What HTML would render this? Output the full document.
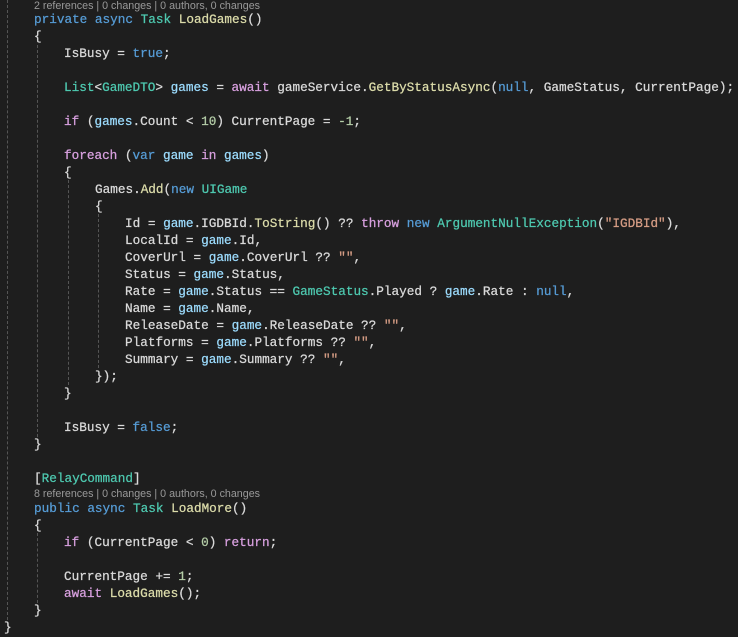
<!DOCTYPE html>
<html><head><meta charset="utf-8"><style>
html,body{margin:0;padding:0;background:#1e1e1e;width:738px;height:637px;overflow:hidden}
.l{position:absolute;height:17px;line-height:17px;font-family:"Liberation Mono",monospace;font-size:12.7px;color:#dadada;white-space:pre;-webkit-text-stroke:0.25px currentColor}
.lens{position:absolute;height:13px;line-height:13px;font-family:"Liberation Sans",sans-serif;font-size:10.7px;color:#999;white-space:pre}
.g{position:absolute;width:0;border-left:1px dashed #555}
.k{color:#569cd6}.t{color:#4ec9b0}.m{color:#dcdcaa}.c{color:#d8a0df}.v{color:#9cdcfe}.s{color:#d69d85}.n{color:#b5cea8}
</style></head><body>
<div class="g" style="left:7px;top:0;height:620px"></div>
<div class="g" style="left:37px;top:45px;height:392px"></div>
<div class="g" style="left:37px;top:533px;height:70px"></div>
<div class="g" style="left:68px;top:180px;height:205px"></div>
<div class="g" style="left:98px;top:214px;height:154px"></div>

<div class="lens" style="left:34px;top:0px">2 references | 0 changes | 0 authors, 0 changes</div>
<div class="l" style="left:34px;top:10.5px"><span class="k">private</span> <span class="k">async</span> <span class="t">Task</span> <span class="m">LoadGames</span>()</div>
<div class="l" style="left:34px;top:27.5px">{</div>
<div class="l" style="left:64px;top:44.5px">IsBusy = <span class="k">true</span>;</div>
<div class="l" style="left:64px;top:78.5px"><span class="t">List</span>&lt;<span class="t">GameDTO</span>&gt; <span class="v">games</span> = <span class="c">await</span> gameService.<span class="m">GetByStatusAsync</span>(<span class="k">null</span>, GameStatus, CurrentPage);</div>
<div class="l" style="left:64px;top:112.5px"><span class="c">if</span> (<span class="v">games</span>.Count &lt; <span class="n">10</span>) CurrentPage = <span class="n">-1</span>;</div>
<div class="l" style="left:64px;top:146.5px"><span class="c">foreach</span> (<span class="k">var</span> <span class="v">game</span> <span class="c">in</span> <span class="v">games</span>)</div>
<div class="l" style="left:64px;top:163.5px">{</div>
<div class="l" style="left:95px;top:180.5px">Games.<span class="m">Add</span>(<span class="k">new</span> <span class="t">UIGame</span></div>
<div class="l" style="left:95px;top:197.5px">{</div>
<div class="l" style="left:125px;top:214.5px">Id = <span class="v">game</span>.IGDBId.<span class="m">ToString</span>() ?? <span class="c">throw</span> <span class="k">new</span> <span class="t">ArgumentNullException</span>(<span class="s">"IGDBId"</span>),</div>
<div class="l" style="left:125px;top:231.5px">LocalId = <span class="v">game</span>.Id,</div>
<div class="l" style="left:125px;top:248.5px">CoverUrl = <span class="v">game</span>.CoverUrl ?? <span class="s">""</span>,</div>
<div class="l" style="left:125px;top:265.5px">Status = <span class="v">game</span>.Status,</div>
<div class="l" style="left:125px;top:282.5px">Rate = <span class="v">game</span>.Status == <span class="t">GameStatus</span>.Played ? <span class="v">game</span>.Rate : <span class="k">null</span>,</div>
<div class="l" style="left:125px;top:299.5px">Name = <span class="v">game</span>.Name,</div>
<div class="l" style="left:125px;top:316.5px">ReleaseDate = <span class="v">game</span>.ReleaseDate ?? <span class="s">""</span>,</div>
<div class="l" style="left:125px;top:333.5px">Platforms = <span class="v">game</span>.Platforms ?? <span class="s">""</span>,</div>
<div class="l" style="left:125px;top:350.5px">Summary = <span class="v">game</span>.Summary ?? <span class="s">""</span>,</div>
<div class="l" style="left:95px;top:367.5px">});</div>
<div class="l" style="left:64px;top:384.5px">}</div>
<div class="l" style="left:64px;top:418.5px">IsBusy = <span class="k">false</span>;</div>
<div class="l" style="left:34px;top:435.5px">}</div>
<div class="l" style="left:34px;top:469.5px">[<span class="t">RelayCommand</span>]</div>
<div class="lens" style="left:34px;top:488px">8 references | 0 changes | 0 authors, 0 changes</div>
<div class="l" style="left:34px;top:499.5px"><span class="k">public</span> <span class="k">async</span> <span class="t">Task</span> <span class="m">LoadMore</span>()</div>
<div class="l" style="left:34px;top:516.5px">{</div>
<div class="l" style="left:64px;top:533.5px"><span class="c">if</span> (CurrentPage &lt; <span class="n">0</span>) <span class="c">return</span>;</div>
<div class="l" style="left:64px;top:567.5px">CurrentPage += <span class="n">1</span>;</div>
<div class="l" style="left:64px;top:584.5px"><span class="c">await</span> <span class="m">LoadGames</span>();</div>
<div class="l" style="left:34px;top:601.5px">}</div>
<div class="l" style="left:4px;top:618.5px">}</div>
</body></html>
